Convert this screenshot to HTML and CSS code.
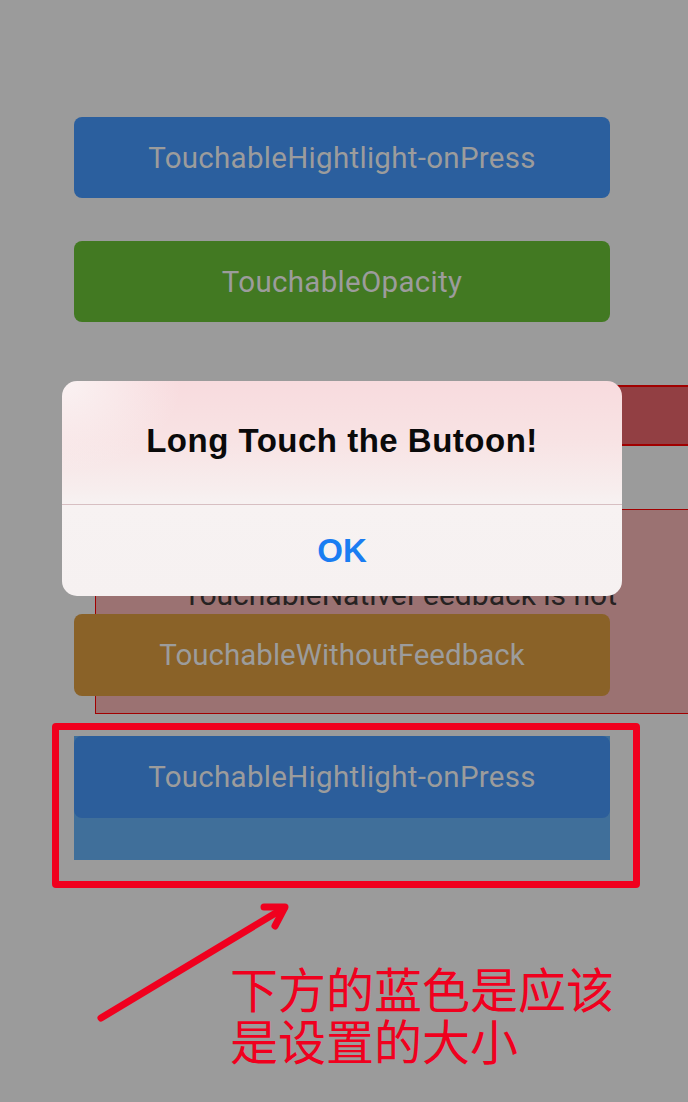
FILE: index.html
```html
<!DOCTYPE html>
<html lang="zh">
<head>
<meta charset="utf-8">
<title>Touchable demo</title>
<link rel="stylesheet" href="styles.css">
</head>
<body>
<div class="screen">
  <div class="btn btn-blue">TouchableHightlight-onPress</div>
  <div class="btn btn-green">TouchableOpacity</div>
  <div class="native-box native-box-top"></div>
  <div class="native-box native-box-main">
    <div class="native-text">TouchableNativeFeedback is not</div>
    <div class="btn btn-brown">TouchableWithoutFeedback</div>
  </div>
  <div class="mark-frame">
    <div class="sized-area">
      <div class="btn btn-blue btn-inner">TouchableHightlight-onPress</div>
    </div>
  </div>
  <div class="note">
    <div class="note-line">下方的蓝色是应该</div>
    <div class="note-line">是设置的大小</div>
  </div>
</div>

<svg class="arrow" width="210" height="135" viewBox="0 0 210 135" aria-hidden="true">
  <g fill="none" stroke="#f0001e" stroke-width="7" stroke-linecap="round" stroke-linejoin="round">
    <line x1="11" y1="123" x2="194" y2="13"/>
    <polyline points="174,12 195,12 185,31"/>
  </g>
</svg>

<div class="alert">
  <div class="alert-title">Long Touch the Butoon!</div>
  <div class="alert-action">OK</div>
</div>
</body>
</html>
```

FILE: styles.css
```css
html, body {
  margin: 0;
  padding: 0;
}
body {
  width: 688px;
  height: 1102px;
  overflow: hidden;
  background: #9b9b9b;
  position: relative;
  font-family: Roboto, "Noto Sans", sans-serif;
}
.screen {
  padding-top: 117px;
  padding-left: 74px;
  display: flex;
  flex-direction: column;
  align-items: flex-start;
}
.btn {
  width: 536px;
  height: 81px;
  border-radius: 8px;
  display: flex;
  align-items: center;
  justify-content: center;
  font-size: 29.5px;
  letter-spacing: 0.3px;
  color: #9c9c9c;
  white-space: nowrap;
}
.btn-blue { background: #2b5f9e; }
.btn-green { background: #427922; margin-top: 43px; }
.btn-brown { background: #8a6228; margin-left: -22px; margin-top: 4px; height: 82px; letter-spacing: 0; }
.native-box {
  margin-left: 21px;
  width: 620px;
  box-sizing: border-box;
  border: 2px solid #a10000;
  border-right: none;
}
.native-box-top {
  margin-top: 63px;
  height: 61px;
  background: #923f43;
}
.native-box-main {
  margin-top: 63px;
  height: 205px;
  background: #9b7272;
  border-width: 1.5px;
  padding-top: 70px;
}
.native-text {
  font-size: 30px;
  line-height: 30px;
  color: #262222;
  padding-left: 87px;
  white-space: nowrap;
}
.mark-frame {
  margin-top: 9px;
  margin-left: -22px;
  width: 588px;
  height: 165px;
  box-sizing: border-box;
  border: 7px solid #f0001e;
  border-radius: 4px;
  padding: 6px 0 0 15px;
}
.sized-area {
  width: 536px;
  height: 124px;
  background: #406f9a;
}
.btn-inner {
  height: 82px;
  background: #2c5e9b;
}
.note {
  margin-top: 73px;
  margin-left: 156px;
  font-family: "Noto Sans CJK SC", "Noto Sans", sans-serif;
  font-size: 48px;
  color: #f0001e;
  font-weight: 400;
  white-space: nowrap;
}
.note-line {
  height: 52px;
  line-height: 52px;
}
.arrow {
  position: absolute;
  left: 90px;
  top: 895px;
}
.alert {
  position: absolute;
  left: 62px;
  top: 381px;
  width: 560px;
  height: 215px;
  border-radius: 15px;
  overflow: hidden;
  background:
    radial-gradient(ellipse 120px 90px at 0 0, rgba(250,245,245,0.9), rgba(250,245,245,0)),
    linear-gradient(180deg, #f8dbde 0px, #f8e3e4 60px, #f7eeee 110px, #f7f2f2 124px, #f6f1f1 215px);
  display: flex;
  flex-direction: column;
}
.alert-title {
  height: 124px;
  box-sizing: border-box;
  border-bottom: 1px solid #d7bfc2;
  display: flex;
  align-items: center;
  justify-content: center;
  font-family: "Liberation Sans", Arial, sans-serif;
  font-weight: 700;
  font-size: 33px;
  letter-spacing: 0.5px;
  color: #0a0a0a;
  padding-bottom: 4px;
}
.alert-action {
  flex: 1;
  display: flex;
  align-items: center;
  justify-content: center;
  font-family: "Liberation Sans", Arial, sans-serif;
  font-weight: 700;
  font-size: 33px;
  color: #1a7df2;
}
```
